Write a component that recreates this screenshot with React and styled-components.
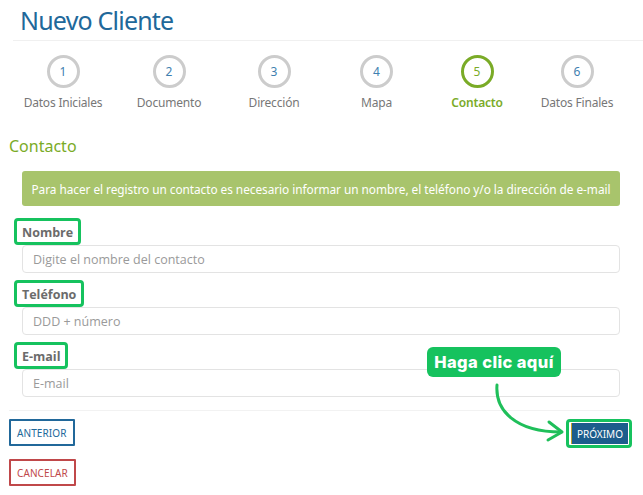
import React from 'react';
import styled, { createGlobalStyle } from 'styled-components';

const GlobalStyle = createGlobalStyle`
  * { box-sizing: border-box; }
  body {
    margin: 0;
    background: #ffffff;
    font-family: "Noto Sans", "Open Sans", sans-serif;
  }
`;

const Page = styled.div`
  width: 643px;
  height: 495px;
  overflow: hidden;
  position: relative;
  background: #fff;
`;

const Header = styled.div`
  margin-left: 13px;
  padding: 5px 0 0 7px;
  height: 41px;
  border-bottom: 1px solid #f0f0f0;
`;

const Title = styled.h1`
  margin: 0;
  font-family: "Noto Sans", sans-serif;
  font-weight: 400;
  font-size: 25px;
  line-height: 30px;
  letter-spacing: -0.8px;
  color: #21689a;
`;

const Steps = styled.div`
  display: grid;
  grid-template-columns: 106px 106px 104px 101px 100px 100px;
  padding: 14px 0 0 10px;
`;

const Step = styled.div`
  display: flex;
  flex-direction: column;
  align-items: center;
`;

const Circle = styled.div`
  width: 33px;
  height: 33px;
  border-radius: 50%;
  border: 3px solid ${p => (p.$active ? '#7aab27' : '#cccccc')};
  display: flex;
  align-items: center;
  justify-content: center;
  font-size: 12px;
  color: ${p => (p.$active ? '#7aab27' : '#3f7fb0')};
`;

const StepLabel = styled.div`
  margin-top: 7px;
  font-size: 12px;
  line-height: 16px;
  letter-spacing: -0.2px;
  color: ${p => (p.$active ? '#7aab27' : '#777')};
  font-weight: ${p => (p.$active ? 600 : 400)};
  white-space: nowrap;
`;

const Section = styled.h2`
  margin: 24px 0 0 9px;
  font-weight: 400;
  font-size: 16px;
  line-height: 22px;
  color: #7aab27;
`;

const Alert = styled.div`
  margin: 14px 23px 0 22px;
  height: 35px;
  border-radius: 3px;
  background: #a8c46c;
  color: #fff;
  font-size: 11.85px;
  display: flex;
  align-items: center;
  justify-content: center;
  letter-spacing: -0.05px;
`;

const Form = styled.div`
  height: 192px;
  overflow: hidden;
  padding: 12px 23px 0 22px;
  display: flex;
  flex-direction: column;
  gap: 7px;
`;

const Field = styled.div`
  display: flex;
  flex-direction: column;
`;

const LabelWrap = styled.div`
  align-self: flex-start;
  margin-left: -8px;
  padding: 1px 5px 0 5px;
  height: 27px;
  border: 3px solid #16c25e;
  border-radius: 4px;
  display: flex;
  align-items: center;
`;

const Label = styled.label`
  font-family: "Open Sans", sans-serif;
  font-weight: 700;
  font-size: 12.5px;
  color: #6b6b6b;
`;

const Input = styled.input`
  height: 28px;
  border: 1px solid #e3e3e3;
  border-radius: 4px;
  padding: 0 10px;
  font-family: "Open Sans", sans-serif;
  font-size: 12.5px;
  color: #555;
  outline: none;
  &::placeholder { color: #9a9a9a; }
`;

const Footer = styled.div`
  margin: 12px 23px 0 9px;
  border-top: 1px solid #f2f2f2;
  padding-top: 8px;
  display: flex;
  justify-content: space-between;
  align-items: flex-start;
`;

const LeftButtons = styled.div`
  display: flex;
  flex-direction: column;
  align-items: flex-start;
  gap: 13px;
`;

const OutlineButton = styled.button`
  height: 27px;
  padding: 0 6px;
  background: #fff;
  border: 2px solid ${p => p.$color};
  color: ${p => p.$color};
  font-family: "Noto Sans", sans-serif;
  font-size: 10px;
  letter-spacing: 0.1px;
  border-radius: 1px;
`;

const Highlight = styled.div`
  display: flex;
  margin-right: -12px;
  padding: 1px 1px 1px 2px;
  border: 3px solid #16c25e;
  border-radius: 4px;
  background: #fff;
`;

const PrimaryButton = styled.button`
  height: 21px;
  padding: 0 5px;
  border: none;
  border-left: 1px solid #c5a12a;
  background: #1c5d8c;
  color: #fff;
  font-family: "Noto Sans", sans-serif;
  font-size: 10px;
`;

const Callout = styled.div`
  position: absolute;
  left: 427px;
  top: 347px;
  width: 134px;
  height: 30px;
  border-radius: 6px;
  background: #16c25e;
  color: #fff;
  font-family: "Inter", sans-serif;
  font-weight: 800;
  font-size: 16.5px;
  display: flex;
  align-items: center;
  justify-content: center;
  letter-spacing: 0.4px;
`;

const Arrow = styled.svg`
  position: absolute;
  left: 485px;
  top: 380px;
`;

const steps = ['Datos Iniciales', 'Documento', 'Dirección', 'Mapa', 'Contacto', 'Datos Finales'];

const fields = [
  { label: 'Nombre', placeholder: 'Digite el nombre del contacto' },
  { label: 'Teléfono', placeholder: 'DDD + número' },
  { label: 'E-mail', placeholder: 'E-mail' },
];

export default function App() {
  return (
    <Page>
      <GlobalStyle />
      <Header>
        <Title>Nuevo Cliente</Title>
      </Header>
      <Steps>
        {steps.map((s, i) => (
          <Step key={s}>
            <Circle $active={i === 4}>{i + 1}</Circle>
            <StepLabel $active={i === 4}>{s}</StepLabel>
          </Step>
        ))}
      </Steps>
      <Section>Contacto</Section>
      <Alert>
        Para hacer el registro un contacto es necesario informar un nombre, el teléfono y/o la dirección de e-mail
      </Alert>
      <Form>
        {fields.map(f => (
          <Field key={f.label}>
            <LabelWrap>
              <Label>{f.label}</Label>
            </LabelWrap>
            <Input placeholder={f.placeholder} />
          </Field>
        ))}
      </Form>
      <Footer>
        <LeftButtons>
          <OutlineButton $color="#21689a">ANTERIOR</OutlineButton>
          <OutlineButton $color="#c0484a">CANCELAR</OutlineButton>
        </LeftButtons>
        <Highlight>
          <PrimaryButton>PRÓXIMO</PrimaryButton>
        </Highlight>
      </Footer>
      <Callout>Haga clic aquí</Callout>
      <Arrow width="90" height="65" viewBox="0 0 90 65" fill="none">
        <path d="M12 5 C 10 30, 30 52, 76 52" stroke="#1fbf5a" strokeWidth="3" strokeLinecap="round" />
        <path d="M64 42 L 77 52 L 63 60" stroke="#1fbf5a" strokeWidth="3" strokeLinecap="round" strokeLinejoin="round" />
      </Arrow>
    </Page>
  );
}
